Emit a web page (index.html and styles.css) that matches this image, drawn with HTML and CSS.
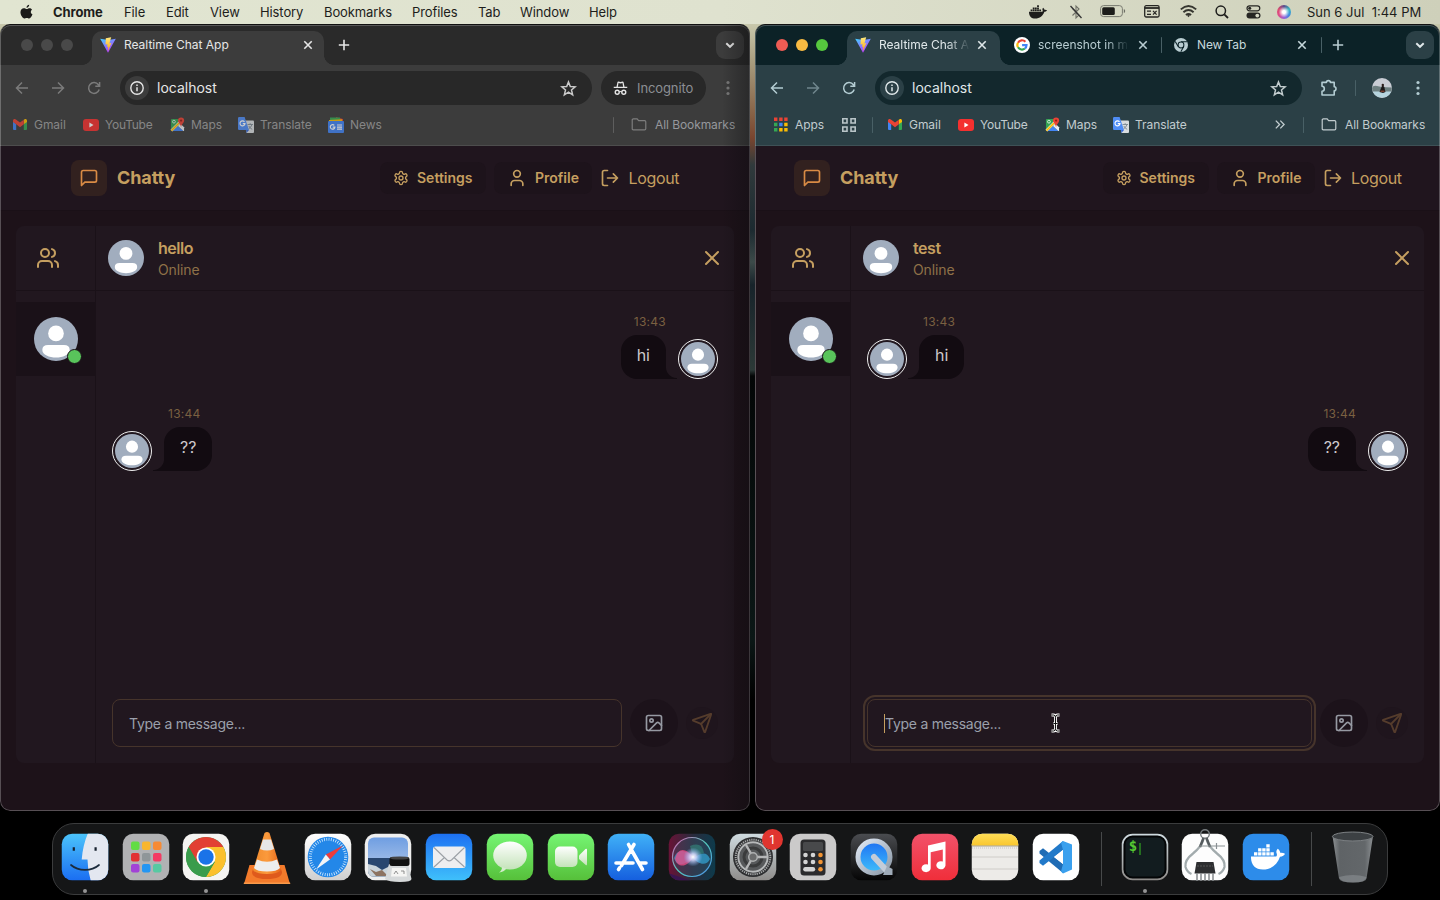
FILE: index.html
```html
<!DOCTYPE html>
<html lang="en">
<head>
<meta charset="utf-8">
<title>Desktop</title>
<link rel="stylesheet" href="styles.css">
</head>
<body>
<svg class="defs" width="0" height="0" aria-hidden="true">
  <defs>
    <linearGradient id="viteA" x1="0" y1="0" x2=".6" y2="1"><stop offset="0" stop-color="#41d1ff"/><stop offset="1" stop-color="#bd34fe"/></linearGradient>
    <linearGradient id="viteB" x1="0" y1="0" x2="0" y2="1"><stop offset="0" stop-color="#ffea83"/><stop offset="1" stop-color="#ffa800"/></linearGradient>
    <linearGradient id="blue" x1="0" y1="0" x2="0" y2="1"><stop offset="0" stop-color="#4cc5fb"/><stop offset="1" stop-color="#1a6df2"/></linearGradient>
    <linearGradient id="mailG" x1="0" y1="0" x2="0" y2="1"><stop offset="0" stop-color="#1d70f2"/><stop offset="1" stop-color="#3fc0fb"/></linearGradient>
    <linearGradient id="storeG" x1="0" y1="0" x2="0" y2="1"><stop offset="0" stop-color="#40b1f7"/><stop offset="1" stop-color="#155fdf"/></linearGradient>
    <linearGradient id="green" x1="0" y1="0" x2="0" y2="1"><stop offset="0" stop-color="#75f573"/><stop offset="1" stop-color="#56c03a"/></linearGradient>
    <linearGradient id="white" x1="0" y1="0" x2="0" y2="1"><stop offset="0" stop-color="#fff"/><stop offset="1" stop-color="#cfcfcf"/></linearGradient>
    <linearGradient id="bubbleG" x1="0" y1="0" x2="0" y2="1"><stop offset="0" stop-color="#fff"/><stop offset="1" stop-color="#c4e3b9"/></linearGradient>
    <linearGradient id="red" x1="0" y1="0" x2="0" y2="1"><stop offset="0" stop-color="#f2526a"/><stop offset="1" stop-color="#f02e3a"/></linearGradient>
    <linearGradient id="dark" x1="0" y1="0" x2="0" y2="1"><stop offset="0" stop-color="#4a4c50"/><stop offset="1" stop-color="#050505"/></linearGradient>
    <linearGradient id="steel" x1="0" y1="0" x2="0" y2="1"><stop offset="0" stop-color="#cfdbe0"/><stop offset="1" stop-color="#8f8d8b"/></linearGradient>
    <linearGradient id="qtR" x1="0" y1="0" x2="1" y2="1"><stop offset="0" stop-color="#dfe8f4"/><stop offset="1" stop-color="#8b98a6"/></linearGradient>
    <linearGradient id="cone" x1="0" y1="0" x2="1" y2="0"><stop offset="0" stop-color="#f08a2c"/><stop offset=".5" stop-color="#fb9a3c"/><stop offset="1" stop-color="#e8671b"/></linearGradient>
    <linearGradient id="siriBg" x1="0" y1="0" x2="1" y2="0"><stop offset="0" stop-color="#6b1236"/><stop offset=".5" stop-color="#2b2a3c"/><stop offset="1" stop-color="#0c3b4c"/></linearGradient>
    <radialGradient id="siriGlow"><stop offset="0" stop-color="#fff"/><stop offset=".35" stop-color="#d6d8ff" stop-opacity=".85"/><stop offset="1" stop-color="#7fb6ff" stop-opacity="0"/></radialGradient>
    <linearGradient id="siriRing" x1="0" y1="0" x2="1" y2="1"><stop offset="0" stop-color="#e05ab0"/><stop offset=".5" stop-color="#52cbbd"/><stop offset="1" stop-color="#4d8be8"/></linearGradient>
    <linearGradient id="trashG" x1="0" y1="0" x2="1" y2="0"><stop offset="0" stop-color="#8c9093"/><stop offset=".18" stop-color="#5f6366"/><stop offset=".8" stop-color="#63676a"/><stop offset="1" stop-color="#8b8f92"/></linearGradient>
    <linearGradient id="notesG" x1="0" y1="0" x2="0" y2="1"><stop offset="0" stop-color="#ffdf59"/><stop offset="1" stop-color="#f9c62e"/></linearGradient>
    <linearGradient id="skyG" x1="0" y1="0" x2="0" y2="1"><stop offset="0" stop-color="#6f9ee2"/><stop offset="1" stop-color="#b9cdea"/></linearGradient>
    <clipPath id="tile"><rect x=".75" y=".75" width="46.5" height="46.5" rx="10.5"/></clipPath>
    <clipPath id="disc"><circle cx="18" cy="18" r="18"/></clipPath>
  </defs>
  <symbol id="vite" viewBox="0 0 16 16"><path fill="url(#viteA)" d="M.2 1.8 8 15.8 15.8 1.8 8.5 3z"/><path fill="url(#viteB)" d="M11.2.2 5.8 1.2 5.5 7.6l2-.4L7 10l1.3-.5-.5 4.7 3.6-8.1-2 .4z"/></symbol>
  <symbol id="close" viewBox="0 0 12 12"><path d="M2.3 2.3 9.7 9.7M9.7 2.3 2.3 9.7" stroke="currentColor" stroke-width="1.6"/></symbol>
  <symbol id="plus" viewBox="0 0 12 12"><path d="M6 .8V11.2M.8 6H11.2" stroke="currentColor" stroke-width="1.6"/></symbol>
  <symbol id="chev" viewBox="0 0 12 12"><path d="M2.3 4.2 6 7.8 9.7 4.2" fill="none" stroke="currentColor" stroke-width="1.9"/></symbol>
  <symbol id="back" viewBox="0 0 16 16"><path d="M14 8H3M8 2.5 2.5 8 8 13.5" fill="none" stroke="currentColor" stroke-width="1.5"/></symbol>
  <symbol id="fwd" viewBox="0 0 16 16"><path d="M2 8H13M8 2.5 13.5 8 8 13.5" fill="none" stroke="currentColor" stroke-width="1.5"/></symbol>
  <symbol id="reload" viewBox="0 0 16 16"><path d="M13.2 9.5A5.4 5.4 0 1 1 12.4 4.800L13.600 6M13.600 2V6.300H9.300" fill="none" stroke="currentColor" stroke-width="1.5"/></symbol>
  <symbol id="info" viewBox="0 0 16 16"><circle cx="8" cy="8" r="6.200" fill="none" stroke="currentColor" stroke-width="1.400"/><path d="M8 7.200V11.300M8 4.600V6.100" stroke="currentColor" stroke-width="1.500"/></symbol>
  <symbol id="star" viewBox="0 0 16 16"><path d="M8 1.800 9.700 6.100 14.300 6.400 10.800 9.400 11.900 13.900 8 11.400 4.100 13.900 5.200 9.400 1.700 6.400 6.300 6.100z" fill="none" stroke="currentColor" stroke-width="1.400"/></symbol>
  <symbol id="incog" viewBox="0 0 16 16"><path fill="currentColor" fill-rule="evenodd" d="M4.700 1.200c.2-.5.600-.8 1.100-.700L8 1 10.200.500c.5-.1 1 .2 1.100.700L12.300 6H15.200V7.500H.8V6H3.700zM5.200 6H10.800L10.100 2.200 8 2.700 5.900 2.200z"/><path d="M6.600 11.700Q8 10.800 9.400 11.700" fill="none" stroke="currentColor" stroke-width="1.200"/><circle cx="4.500" cy="12" r="2.100" fill="none" stroke="currentColor" stroke-width="1.500"/><circle cx="11.500" cy="12" r="2.100" fill="none" stroke="currentColor" stroke-width="1.500"/></symbol>
  <symbol id="dots" viewBox="0 0 4 16"><g fill="currentColor"><circle cx="2" cy="2.500" r="1.600"/><circle cx="2" cy="8" r="1.600"/><circle cx="2" cy="13.500" r="1.600"/></g></symbol>
  <symbol id="folder" viewBox="0 0 16 14"><path d="M.7 2.200Q.7 1 1.900 1H6L7.600 2.800H14Q15.300 2.800 15.300 4V11.500Q15.300 12.700 14 12.700H1.900Q.7 12.700.7 11.500z" fill="none" stroke="currentColor" stroke-width="1.300"/></symbol>
  <symbol id="gmail" viewBox="0 0 14 11"><path fill="#4285f4" d="M0 2V10Q0 11 1 11H3.200V5L0 2.500z"/><path fill="#34a853" d="M10.800 11H13Q14 11 14 10V2.300L10.800 5z"/><path fill="#fbbc04" d="M10.800 1.200V5.300L14 2.900V1.700C14 .1 12.200-.5 10.800.700z"/><path fill="#ea4335" d="M0 1.700C0 .1 1.800-.5 3.200.700L7 3.600 10.800.700V5.300L7 8.200 3.200 5.300 0 2.900z"/></symbol>
  <symbol id="yt" viewBox="0 0 16 12"><rect width="16" height="12" rx="3" fill="#f4302f"/><path d="M6.400 3.600V8.400L10.500 6z" fill="#fff"/></symbol>
  <symbol id="maps" viewBox="0 0 16 16"><path fill="#35a353" d="M1 3Q1 2 2 2H9L12 8 1 14z"/><path fill="#4285f4" d="M3 15 8.500 9.500 14.500 15z"/><path fill="#e9eef2" d="M8.500 9.500 11 7 15 11V15L14.300 15z"/><path d="M1.500 14.500 11 5" stroke="#fff" stroke-width="2.800"/><path d="M1.500 14.500 9.500 6.500" stroke="#fbbc04" stroke-width="1.700"/><circle cx="4.200" cy="5" r="1.500" fill="none" stroke="#d9efdf"/><path fill="#ea4335" d="M11.800.500a3.300 3.300 0 0 1 3.300 3.300c0 2.600-2.700 3.600-3.300 7.200-.6-3.600-3.300-4.600-3.300-7.200a3.300 3.300 0 0 1 3.300-3.300z"/><circle cx="11.800" cy="3.800" r="1.200" fill="#951f17"/></symbol>
  <symbol id="translate" viewBox="0 0 16 16"><path fill="#d8dcdf" d="M6 3.500H15Q16 3.500 16 4.500V15Q16 16 15 16H8.500z"/><path d="M9.500 7.500H15M12.200 6.200V7.500M14 7.600Q13 10.500 10.500 12M10.800 9Q12 11.500 14.200 12.300" fill="none" stroke="#7b8791" stroke-width=".9"/><path fill="#3367d6" d="M8 13H11L8.500 16z"/><path fill="#4f8df5" d="M0 1.200Q0 0 1.200 0H6.600L11 13H1.200Q0 13 0 12z"/><path d="M6.500 4.900A2.500 2.500 0 1 0 7 6.600H4.800" fill="none" stroke="#fff" stroke-width="1.100"/></symbol>
  <symbol id="news" viewBox="0 0 16 16"><path fill="#ea4335" d="M8 .3 15 2V5H8z"/><path fill="#34a853" d="M2 .5H12V5H2z"/><path fill="#fbbc04" d="M1 3 14 2.200V6H1z"/><rect y="4" width="16" height="12" rx="1" fill="#4285f4"/><path d="M6.300 8.300A2.300 2.300 0 1 0 6.900 10.200H4.700M9 8H14M9 10.100H14M9 12.200H14" fill="none" stroke="#fff" stroke-width="1.200"/></symbol>
  <symbol id="face" viewBox="0 0 36 36"><g clip-path="url(#disc)"><rect width="36" height="36" fill="#a1adbe"/><circle cx="18" cy="13.400" r="6.400" fill="#fff"/><path fill="#fff" d="M11.500 23H24.500Q29.200 23 29.200 27C29.200 31 23.500 33.200 18 33.200S6.800 31 6.800 27Q6.800 23 11.500 23z"/></g></symbol>
  <symbol id="msg" viewBox="0 0 24 24"><path d="M21 15a2 2 0 0 1-2 2H7l-4 4V5a2 2 0 0 1 2-2h14a2 2 0 0 1 2 2z"/></symbol>
  <symbol id="gear" viewBox="0 0 24 24"><path d="M12.220 2h-.44a2 2 0 0 0-2 2v.18a2 2 0 0 1-1 1.730l-.43.25a2 2 0 0 1-2 0l-.15-.08a2 2 0 0 0-2.730.730l-.22.38a2 2 0 0 0 .73 2.730l.15.1a2 2 0 0 1 1 1.720v.51a2 2 0 0 1-1 1.740l-.15.09a2 2 0 0 0-.73 2.730l.22.38a2 2 0 0 0 2.730.730l.15-.08a2 2 0 0 1 2 0l.43.25a2 2 0 0 1 1 1.730V20a2 2 0 0 0 2 2h.44a2 2 0 0 0 2-2v-.18a2 2 0 0 1 1-1.730l.43-.25a2 2 0 0 1 2 0l.15.08a2 2 0 0 0 2.730-.73l.22-.39a2 2 0 0 0-.73-2.730l-.15-.08a2 2 0 0 1-1-1.740v-.5a2 2 0 0 1 1-1.740l.15-.09a2 2 0 0 0 .73-2.730l-.22-.38a2 2 0 0 0-2.730-.73l-.15.08a2 2 0 0 1-2 0l-.43-.25a2 2 0 0 1-1-1.730V4a2 2 0 0 0-2-2z"/><circle cx="12" cy="12" r="3"/></symbol>
  <symbol id="user" viewBox="0 0 24 24"><path d="M19 21v-2a4 4 0 0 0-4-4H9a4 4 0 0 0-4 4v2"/><circle cx="12" cy="7" r="4"/></symbol>
  <symbol id="logout" viewBox="0 0 24 24"><path d="M9 21H5a2 2 0 0 1-2-2V5a2 2 0 0 1 2-2h4M16 17l5-5-5-5M21 12H9"/></symbol>
  <symbol id="users" viewBox="0 0 24 24"><path d="M16 21v-2a4 4 0 0 0-4-4H6a4 4 0 0 0-4 4v2"/><circle cx="9" cy="7" r="4"/><path d="M22 21v-2a4 4 0 0 0-3-3.870M16 3.130a4 4 0 0 1 0 7.750"/></symbol>
  <symbol id="x" viewBox="0 0 24 24"><path d="M18 6 6 18M6 6l12 12"/></symbol>
  <symbol id="image" viewBox="0 0 24 24"><rect x="3" y="3" width="18" height="18" rx="2"/><circle cx="9" cy="9" r="2"/><path d="m21 15-3.086-3.086a2 2 0 0 0-2.828 0L6 21"/></symbol>
  <symbol id="send" viewBox="0 0 24 24"><path d="M14.536 21.686a.5.5 0 0 0 .937-.024l6.500-19a.496.496 0 0 0-.635-.635l-19 6.500a.5.5 0 0 0-.024.937l7.930 3.180a2 2 0 0 1 1.112 1.110z"/><path d="m21.854 2.147-10.940 10.939"/></symbol>
  <symbol id="whale" viewBox="0 0 34 26"><path fill="currentColor" d="M0 12.500H25.200C26 11.600 26.200 10.600 25.600 9.200 25 7.600 25.400 6 26.700 4.800 28.200 5.800 29 7.200 29.200 8.700 31 8.500 32.700 8.800 34 9.800 33.200 11.600 31.500 12.600 29 12.700 26.400 20.600 20.300 25.500 11.800 25.500 4 25.500-.3 20.500 0 12.500z"/><g fill="currentColor"><path d="M3 8.300h3.400v3.300H3zM7.100 8.300h3.400v3.300H7.100zM11.200 8.300h3.400v3.300h-3.400zM15.300 8.300h3.400v3.300h-3.400zM19.400 8.300h3.400v3.300h-3.400zM7.100 4.300h3.400v3.300H7.100zM11.200 4.300h3.400v3.300h-3.400zM15.300 4.300h3.400v3.300h-3.400zM15.300.3h3.400v3.300h-3.400z"/></g></symbol>
</svg>

<div class="desktop">
  <header class="menubar">
    <svg class="apple" viewBox="0 0 14 16"><path fill="#1b1b19" d="M9.900.2C10 1.600 8.700 3.500 7 3.500 6.800 2 8.300.3 9.900.2zM12.900 5.500C11 6.700 11.200 9.500 13.400 10.500 12.700 12.700 11.400 15 9.900 15 8.900 15 8.600 14.400 7.300 14.400 6 14.400 5.600 15 4.700 15 2.900 15 .5 11.400.5 8.400.5 5.500 2.300 4 4.100 4 5.400 4 6.300 4.800 7.200 4.800 8 4.800 9 3.900 10.500 4 11.500 4 12.400 4.600 12.900 5.500z"/></svg>
    <nav class="menus"><b>Chrome</b><span>File</span><span>Edit</span><span>View</span><span>History</span><span>Bookmarks</span><span>Profiles</span><span>Tab</span><span>Window</span><span>Help</span></nav>
    <div class="status">
      <svg width="18" height="14"><use href="#whale"/></svg>
      <svg width="14" height="16" viewBox="0 0 14 16" fill="none" stroke="#6f7067" stroke-width="1.100"><path d="M3.500 4.500 10 11 7 14V2L10 5 3.500 11.500"/><path d="M1.500 2 12.500 14" stroke="#333" stroke-width="1.300"/></svg>
      <svg width="26" height="13" viewBox="0 0 26 13"><rect x=".6" y=".6" width="21.800" height="11" rx="3" fill="none" stroke="#797a70"/><rect x="2.200" y="2.200" width="12.600" height="7.800" rx="1.500" fill="#1c1c1a"/><path d="M23.800 4V8.200Q25.200 7.600 25.200 6.100T23.800 4z" fill="#6d6e65"/></svg>
      <svg width="16" height="13" viewBox="0 0 16 13" fill="none" stroke="#262623" stroke-width="1.300"><rect x=".7" y=".7" width="14.400" height="11.300" rx="1.500"/><path d="M1 3H15" stroke-width="1.800"/><path d="M3 6.200H7M3 9.300H7M9 5.800l3.600 3.900M12.600 5.800 9 9.700" stroke-width="1.200"/></svg>
      <svg width="17" height="13" viewBox="0 0 17 13" fill="none" stroke="#35352f" stroke-width="1.900"><path d="M.8 4.400Q8.500-2.300 16.200 4.400M3.400 7.300Q8.500 2.900 13.600 7.300M5.900 9.900Q8.500 7.900 11.100 9.900"/><path d="M8.500 12.200 7 10.600Q8.500 9.600 10 10.600z" fill="#35352f" stroke="none"/></svg>
      <svg width="14" height="14" viewBox="0 0 14 14" fill="none" stroke="#1d1d1b" stroke-width="1.500"><circle cx="5.800" cy="5.800" r="4.700"/><path d="M9.300 9.300 13 13" stroke-width="1.800"/></svg>
      <svg width="15" height="14" viewBox="0 0 15 14"><rect x="1" y=".8" width="12.800" height="5" rx="2.500" fill="none" stroke="#262623" stroke-width="1.200"/><circle cx="3.700" cy="3.300" r="1.500" fill="#262623"/><rect x=".5" y="7.600" width="14" height="6" rx="3" fill="#262623"/><circle cx="11.300" cy="10.600" r="1.900" fill="#d6d8c5"/></svg>
      <i class="siri-dot"></i>
      <time>Sun 6 Jul&nbsp; 1:44 PM</time>
    </div>
  </header>

  <section class="window win-left">
    <div class="tabstrip">
      <div class="lights"><i></i><i></i><i></i></div>
      <div class="tab active"><svg width="16" height="16"><use href="#vite"/></svg><span class="title">Realtime Chat App</span><svg class="tx" width="12" height="12"><use href="#close"/></svg></div>
      <svg class="plus" width="12" height="12"><use href="#plus"/></svg>
      <div class="drop"><svg width="12" height="12"><use href="#chev"/></svg></div>
    </div>
    <div class="toolbar">
      <div class="nav"><svg width="16" height="16"><use href="#back"/></svg><svg width="16" height="16"><use href="#fwd"/></svg><svg width="16" height="16"><use href="#reload"/></svg></div>
      <div class="omni"><i class="site"><svg width="16" height="16"><use href="#info"/></svg></i><span>localhost</span><svg class="star" width="17" height="17"><use href="#star"/></svg></div>
      <div class="incog"><svg width="15" height="15"><use href="#incog"/></svg><span>Incognito</span></div>
      <svg class="dots" width="4" height="16"><use href="#dots"/></svg>
    </div>
    <div class="bookmarks">
      <div class="bm w70"><svg width="14" height="11"><use href="#gmail"/></svg>Gmail</div>
      <div class="bm w87"><svg width="16" height="12"><use href="#yt"/></svg>YouTube</div>
      <div class="bm w68"><svg width="15" height="15"><use href="#maps"/></svg>Maps</div>
      <div class="bm w90"><svg width="16" height="16"><use href="#translate"/></svg>Translate</div>
      <div class="bm"><svg width="16" height="16"><use href="#news"/></svg>News</div>
      <div class="all"><i class="sep"></i><svg width="16" height="13"><use href="#folder"/></svg><span>All Bookmarks</span></div>
    </div>
    <main class="page">
      <div class="appbar">
        <i class="logo"><svg class="ic" width="20" height="20"><use href="#msg"/></svg></i><h1>Chatty</h1>
        <div class="actions"><a class="btn set"><svg class="ic" width="16" height="16"><use href="#gear"/></svg><span>Settings</span></a><a class="btn prof"><svg class="ic" width="20" height="20"><use href="#user"/></svg><span>Profile</span></a><a class="out"><svg class="ic" width="20" height="20"><use href="#logout"/></svg><span>Logout</span></a></div>
      </div>
      <div class="panel">
        <aside><div class="people"><svg class="ic" width="24" height="24"><use href="#users"/></svg></div><div class="contact"><div class="pic"><svg width="44" height="44"><use href="#face"/></svg><i class="on"></i></div></div></aside>
        <div class="chat">
          <div class="chathead"><svg width="36" height="36"><use href="#face"/></svg><div class="who"><b>hello</b><span>Online</span></div><svg class="ic x" width="24" height="24"><use href="#x"/></svg></div>
          <div class="msgs">
            <div class="msg end"><time>13:43</time><div class="line"><p>hi</p><i class="ring"><svg width="34" height="34"><use href="#face"/></svg></i></div></div>
            <div class="msg"><time>13:44</time><div class="line"><i class="ring"><svg width="34" height="34"><use href="#face"/></svg></i><p>??</p></div></div>
          </div>
          <div class="form"><div class="input"><span>Type a message...</span></div><i class="pick"><svg class="ic" width="20" height="20"><use href="#image"/></svg></i><i class="send"><svg class="ic" width="22" height="22"><use href="#send"/></svg></i></div>
        </div>
      </div>
    </main>
  </section>

  <section class="window win-right">
    <div class="tabstrip">
      <div class="lights"><i></i><i></i><i></i></div>
      <div class="tab active"><svg width="16" height="16"><use href="#vite"/></svg><span class="title fade">Realtime Chat A</span><svg class="tx" width="12" height="12"><use href="#close"/></svg></div>
      <div class="tab t2"><svg width="16" height="16" viewBox="0 0 16 16"><circle cx="8" cy="8" r="8" fill="#fff"/><g fill="none" stroke-width="2.200"><path stroke="#ea4335" d="M11.400 4.700A4.600 4.600 0 0 0 4 5.700"/><path stroke="#fbbc05" d="M4 5.700A4.600 4.600 0 0 0 4 10.300"/><path stroke="#34a853" d="M4 10.300A4.600 4.600 0 0 0 10.900 11.500"/><path stroke="#4285f4" d="M10.900 11.500A4.600 4.600 0 0 0 12.500 8.200H8.100"/></g></svg><span class="title fade">screenshot in m</span><svg class="tx" width="12" height="12"><use href="#close"/></svg></div>
      <i class="sep"></i>
      <div class="tab t3"><svg width="16" height="16" viewBox="0 0 16 16"><circle cx="8" cy="8" r="7" fill="#b9cdd2"/><g stroke="#0d242a" stroke-width="1.100" fill="none"><path d="M8 4.800H14M5.200 9.600 2.200 4.400M10.800 9.600 7.800 14.800"/></g><circle cx="8" cy="8" r="3.400" fill="#0d242a"/><circle cx="8" cy="8" r="2.400" fill="#b9cdd2"/></svg><span class="title">New Tab</span><svg class="tx" width="12" height="12"><use href="#close"/></svg></div>
      <i class="sep"></i>
      <svg class="plus" width="12" height="12"><use href="#plus"/></svg>
      <div class="drop"><svg width="12" height="12"><use href="#chev"/></svg></div>
    </div>
    <div class="toolbar">
      <div class="nav"><svg width="16" height="16"><use href="#back"/></svg><svg class="off" width="16" height="16"><use href="#fwd"/></svg><svg width="16" height="16"><use href="#reload"/></svg></div>
      <div class="omni"><i class="site"><svg width="16" height="16"><use href="#info"/></svg></i><span>localhost</span><svg class="star" width="17" height="17"><use href="#star"/></svg></div>
      <svg class="puzzle" width="18" height="18" viewBox="0 0 18 18"><path d="M2 3.400H6.400A2 1.800 0 0 1 10.400 3.400H14.200V7.800A1.800 2 0 0 1 14.200 11.800V16H2V12.300A2.300 2.500 0 0 0 2 7.300z" fill="none" stroke="#b3ccd2" stroke-width="1.600" stroke-linejoin="round"/></svg>
      <i class="sep"></i>
      <svg class="me" width="20" height="20" viewBox="0 0 20 20"><circle cx="10" cy="10" r="10" fill="#c9ccd4"/><path d="M0 10Q1 7 5 8T11 9 20 9.500L19 14H1z" fill="#6d7f80"/><path d="M.8 13.500H19.200A10 10 0 0 1 .8 13.500z" fill="#b5d4de"/><path d="M7.500 14 9.500 9 10.500 7 12.300 9 13.500 14 11 15z" fill="#1b1819"/><circle cx="10.800" cy="7" r="1.200" fill="#2a1d1a"/><path d="M8.500 13.200h4" stroke="#a0523c"/></svg>
      <svg class="dots" width="4" height="16"><use href="#dots"/></svg>
    </div>
    <div class="bookmarks">
      <div class="bm w68"><svg width="14" height="15" viewBox="0 0 14 15"><path fill="#ea4335" d="M0 .5h3.400v3.400H0zM5.200.5h3.400v3.400H5.200zM10.200.5h3.400v3.400h-3.400z"/><path fill="#34a853" d="M0 5.800h3.400v3.400H0zM0 11.100h3.400v3.400H0z"/><path fill="#4285f4" d="M5.200 5.800h3.400v3.400H5.200z"/><path fill="#fbbc04" d="M10.200 5.800h3.400v3.400h-3.400zM5.200 11.100h3.400v3.400H5.200zM10.200 11.100h3.400v3.400h-3.400z"/></svg>Apps</div>
      <div class="bm w30"><svg width="14" height="14" viewBox="0 0 14 14" fill="none" stroke="#b9c5c8" stroke-width="1.600"><path d="M.8.800h4.200v4.200H.8zM9 .8h4.200v4.200H9zM.8 9h4.200v4.200H.8zM9 9h4.200v4.200H9z"/></svg></div>
      <i class="sep bsep"></i>
      <div class="bm w70"><svg width="14" height="11"><use href="#gmail"/></svg>Gmail</div>
      <div class="bm w87"><svg width="16" height="12"><use href="#yt"/></svg>YouTube</div>
      <div class="bm w68"><svg width="15" height="15"><use href="#maps"/></svg>Maps</div>
      <div class="bm"><svg width="16" height="16"><use href="#translate"/></svg>Translate</div>
      <div class="all"><svg class="more" width="10" height="9" viewBox="0 0 10 9"><path d="M.8.600 4.600 4.500.8 8.400M5.300.600 9.100 4.500 5.300 8.400" fill="none" stroke="currentColor" stroke-width="1.300"/></svg><i class="sep"></i><svg width="16" height="13"><use href="#folder"/></svg><span>All Bookmarks</span></div>
    </div>
    <main class="page">
      <div class="appbar">
        <i class="logo"><svg class="ic" width="20" height="20"><use href="#msg"/></svg></i><h1>Chatty</h1>
        <div class="actions"><a class="btn set"><svg class="ic" width="16" height="16"><use href="#gear"/></svg><span>Settings</span></a><a class="btn prof"><svg class="ic" width="20" height="20"><use href="#user"/></svg><span>Profile</span></a><a class="out"><svg class="ic" width="20" height="20"><use href="#logout"/></svg><span>Logout</span></a></div>
      </div>
      <div class="panel">
        <aside><div class="people"><svg class="ic" width="24" height="24"><use href="#users"/></svg></div><div class="contact"><div class="pic"><svg width="44" height="44"><use href="#face"/></svg><i class="on"></i></div></div></aside>
        <div class="chat">
          <div class="chathead"><svg width="36" height="36"><use href="#face"/></svg><div class="who"><b>test</b><span>Online</span></div><svg class="ic x" width="24" height="24"><use href="#x"/></svg></div>
          <div class="msgs">
            <div class="msg"><time>13:43</time><div class="line"><i class="ring"><svg width="34" height="34"><use href="#face"/></svg></i><p>hi</p></div></div>
            <div class="msg end"><time>13:44</time><div class="line"><p>??</p><i class="ring"><svg width="34" height="34"><use href="#face"/></svg></i></div></div>
          </div>
          <div class="form"><div class="input focus"><span>Type a message...</span></div><i class="pick"><svg class="ic" width="20" height="20"><use href="#image"/></svg></i><i class="send"><svg class="ic" width="22" height="22"><use href="#send"/></svg></i></div>
        </div>
      </div>
    </main>
  </section>

  <svg class="ibeam" width="11" height="20" viewBox="0 0 11 20" fill="none"><path d="M1.500 2H3.500Q5.500 2 5.500 4.500V15.500Q5.500 18 3.500 18H1.500M9.500 2H7.500Q5.500 2 5.500 4.500M9.500 18H7.500Q5.500 18 5.500 15.500M3.500 10.500H7.500" stroke="#fff" stroke-width="2.800"/><path d="M1.500 2H3.500Q5.500 2 5.500 4.500V15.500Q5.500 18 3.500 18H1.500M9.500 2H7.500Q5.500 2 5.500 4.500M9.500 18H7.500Q5.500 18 5.500 15.500M3.500 10.500H7.500" stroke="#111" stroke-width="1"/></svg>

  <footer class="dock">
    <div class="app run"><svg viewBox="0 0 48 48"><g clip-path="url(#tile)"><rect width="48" height="48" fill="url(#blue)"/><path d="M27 0C23.500 8 21.500 17 20.700 26.500H26.500Q26.500 37 29.800 48H48V0z" fill="#e3e7f0"/></g><path d="M12.800 14.200V17.700M34.600 14.200V17.700" stroke="#17222e" stroke-width="2.200"/><path d="M10 32C17.500 38.500 30.500 38.500 38 32" fill="none" stroke="#1b2b3c" stroke-width="1.700" stroke-linecap="round"/></svg></div>
    <div class="app"><svg viewBox="0 0 48 48"><rect x=".75" y=".75" width="46.500" height="46.500" rx="10.500" fill="#b1b2b4"/><g><rect x="9" y="8.500" width="8.500" height="8.500" rx="2" fill="#62dc45"/><rect x="20" y="8.500" width="8.500" height="8.500" rx="2" fill="#f8b62d"/><rect x="31" y="8.500" width="8.500" height="8.500" rx="2" fill="#f68a34"/><rect x="9" y="20" width="8.500" height="8.500" rx="2" fill="#e23033"/><rect x="20" y="20" width="8.500" height="8.500" rx="2" fill="#8f9699"/><rect x="31" y="20" width="8.500" height="8.500" rx="2" fill="#f33a63"/><rect x="9" y="31" width="8.500" height="8.500" rx="2" fill="#a243d6"/><rect x="20" y="31" width="8.500" height="8.500" rx="2" fill="#2496f2"/><rect x="31" y="31" width="8.500" height="8.500" rx="2" fill="#57c9a2"/></g></svg></div>
    <div class="app run"><svg viewBox="0 0 48 48"><rect x=".75" y=".75" width="46.500" height="46.500" rx="10.500" fill="#f5f4f2"/><circle cx="24" cy="24" r="20" fill="#3a9c4c"/><path d="M24 24 6.700 14A20 20 0 0 1 41.300 14z" fill="#e23f33"/><path d="M24 44A20 20 0 0 0 41.300 14H24L32.700 29z" fill="#fbc02d"/><path d="M6.700 14 15.300 29 24 14z" fill="#e23f33"/><path d="M6.700 14 15.300 29 24 30 32.700 29 24 44A20 20 0 0 1 6.700 14z" fill="#3a9c4c"/><circle cx="24" cy="24" r="9.500" fill="#fff"/><circle cx="24" cy="24" r="7.700" fill="#1a73e8"/></svg></div>
    <div class="app"><svg viewBox="0 0 48 48"><path d="M6.500 32H41.500L47 51H1z" fill="#f47b2b"/><path d="M1 49.500H47L47.300 51H.7z" fill="#f99a4a"/><path d="M9 39Q9 46 24 46T39 39L38 36H10z" fill="#df5a1c"/><path d="M21.500 0Q24-2 26.500 0L38 37Q35 41 24 41T10 37z" fill="url(#cone)"/><path d="M20 6.500H28L31 16Q24 19 17 16z" fill="#e6e6e6"/><path d="M14 26.500Q24 31 34 26.500L37 35Q34 38.500 24 38.500T11 35z" fill="#ededed"/></svg></div>
    <div class="app"><svg viewBox="0 0 48 48"><rect x=".75" y=".75" width="46.500" height="46.500" rx="10.500" fill="url(#white)"/><circle cx="24" cy="24" r="20.300" fill="#2387e8"/><circle cx="24" cy="24" r="17.700" fill="none" stroke="#d5ecff" stroke-width="3" stroke-dasharray=".8 1.520"/><path d="M39 12.500 21.800 21.500 26 26.500z" fill="#ef3b3a"/><path d="M12 36.500 21.800 21.500 26 26.500z" fill="#f3f5f7"/></svg></div>
    <div class="app"><svg viewBox="0 0 48 48"><rect x=".75" y=".75" width="46.500" height="46.500" rx="10.500" fill="#eee"/><rect x="4" y="4.500" width="40" height="39" rx="6" fill="url(#skyG)"/><path d="M4 25H44V37.500Q44 43.500 38 43.500H10Q4 43.500 4 37.500z" fill="#28466f"/><path d="M4 31 12 33 18 37 26 33V43.500H10Q4 43.500 4 38z" fill="#c9d3da"/><path d="M6 36 12 39 18 37 24 43H12z" fill="#8d7361"/><path d="M25 31H44L47.500 46Q47.500 49 36 49T21 46z" fill="#d6d9da"/><rect x="25.500" y="24" width="20" height="9" rx="2.500" fill="#111"/><ellipse cx="35.500" cy="25" rx="9.500" ry="1.600" fill="#444"/><path d="M28 35H42L43 43.500H27z" fill="#f5f5f3"/><path d="M30 41 32 38 34 41M37 38H40V41" fill="none" stroke="#777" stroke-width=".8"/></svg></div>
    <div class="app"><svg viewBox="0 0 48 48"><rect x=".75" y=".75" width="46.500" height="46.500" rx="10.500" fill="url(#mailG)"/><rect x="8" y="13.500" width="32.500" height="21.500" rx="2.500" fill="#eeeef0"/><path d="M9 14.500 22 27Q24.200 28.800 26.500 27L39.500 14.500M9 34 19.500 24.500M39.500 34 29 24.500" fill="none" stroke="#9ca0a6" stroke-width="1.100"/></svg></div>
    <div class="app"><svg viewBox="0 0 48 48"><rect x=".75" y=".75" width="46.500" height="46.500" rx="10.500" fill="url(#green)"/><ellipse cx="24" cy="22.500" rx="16.800" ry="14" fill="url(#bubbleG)"/><path d="M16 34Q16 37.500 13 39.500 18 39 20.500 35.500z" fill="#d5ebcd"/></svg></div>
    <div class="app"><svg viewBox="0 0 48 48"><rect x=".75" y=".75" width="46.500" height="46.500" rx="10.500" fill="url(#green)"/><rect x="8" y="13.500" width="22.500" height="20.500" rx="5" fill="url(#bubbleG)"/><path d="M32 22.500 38.500 16Q40 15 40 17V31Q40 33 38.500 31.700L32 26z" fill="url(#bubbleG)"/></svg></div>
    <div class="app"><svg viewBox="0 0 48 48"><rect x=".75" y=".75" width="46.500" height="46.500" rx="10.500" fill="url(#storeG)"/><path d="M21.500 11.500 24 16M27 11.500 14.500 32.500M12.500 35 11.500 36.500M24.500 17 35.500 36.500M9 30H26M33 30H39" stroke="#fff" stroke-width="3.600" stroke-linecap="round"/></svg></div>
    <div class="app"><svg viewBox="0 0 48 48"><g clip-path="url(#tile)"><rect width="48" height="48" fill="url(#siriBg)"/><path d="M0 48V40L24 48z" fill="#3a1550"/></g><circle cx="24" cy="24" r="19.500" fill="#41607a" fill-opacity=".3" stroke="url(#siriRing)" stroke-width="1.200"/><path d="M6 25C10 15 18 17 24 24 30 31 38 34 42 26 38 16 30 22 24 26 18 31 9 35 6 25z" fill="#35b9ee" opacity=".6"/><path d="M7 26C10 14 18 15 25 24 20 34 10 36 7 26z" fill="#f04c88" opacity=".75"/><path d="M22 13Q34 8 36 20L25 24z" fill="#37b598" opacity=".4"/><circle cx="25" cy="24" r="9.500" fill="url(#siriGlow)"/></svg></div>
    <div class="app"><svg viewBox="0 0 48 48"><rect x=".75" y=".75" width="46.500" height="46.500" rx="10.500" fill="url(#steel)"/><circle cx="24" cy="24" r="20" fill="#2e2f31"/><circle cx="24" cy="24" r="17.300" fill="none" stroke="#a4a6a7" stroke-width="2" stroke-dasharray="1.300 .9"/><circle cx="24" cy="24" r="14.700" fill="#57595b" stroke="#b7b9ba" stroke-width="2"/><circle cx="24" cy="24" r="9" fill="none" stroke="#3a3b3c" stroke-width="3"/><path d="M24 24H38M24 24 17 12M24 24 17 36" stroke="#b5b6b7" stroke-width="2.400"/><circle cx="24" cy="24" r="4.300" fill="#6b6c6d" stroke="#aeb0b1" stroke-width="1.500"/></svg><em class="badge">1</em></div>
    <div class="app"><svg viewBox="0 0 48 48"><rect x=".75" y=".75" width="46.500" height="46.500" rx="10.500" fill="#cbcaca"/><rect x="11.500" y="6.500" width="25" height="36" rx="3.500" fill="#2b2b2d"/><rect x="14" y="9" width="20" height="9" rx="1.500" fill="#48494b"/><g fill="#d4d4d4"><circle cx="16.500" cy="22" r="2.300"/><circle cx="24" cy="22" r="2.300"/><circle cx="16.500" cy="29" r="2.300"/><circle cx="24" cy="29" r="2.300"/><rect x="14.200" y="34" width="12" height="4.500" rx="2.200"/></g><g fill="#f39433"><circle cx="31.500" cy="22" r="2.300"/><circle cx="31.500" cy="29" r="2.300"/><circle cx="31.500" cy="36.200" r="2.300"/></g></svg></div>
    <div class="app"><svg viewBox="0 0 48 48"><rect x=".75" y=".75" width="46.500" height="46.500" rx="10.500" fill="url(#dark)"/><circle cx="24" cy="24" r="16" fill="url(#mailG)" stroke="url(#qtR)" stroke-width="5"/><path d="M24 24 36 37" stroke="#c3ccd8" stroke-width="6" stroke-linecap="round"/><path d="M33 42H42.500V36L37 33z" fill="#9fabb8"/></svg></div>
    <div class="app"><svg viewBox="0 0 48 48"><rect x=".75" y=".75" width="46.500" height="46.500" rx="10.500" fill="url(#red)"/><path d="M17 12.500 34.500 8.500V32.500A4.600 4 0 1 1 31.800 28.600V16.500L19.700 19.200V35.500A4.600 4 0 1 1 17 31.500z" fill="#fff"/></svg></div>
    <div class="app"><svg viewBox="0 0 48 48"><g clip-path="url(#tile)"><rect width="48" height="48" fill="#edebe8"/><rect width="48" height="12.800" fill="url(#notesG)"/></g><path d="M1 13H47" stroke="#a9a38e"/><path d="M1 15H47" stroke="#bbb" stroke-dasharray=".8 1.200"/><path d="M1 24H47M1 36H47" stroke="#cfccc8"/></svg></div>
    <div class="app"><svg viewBox="0 0 48 48"><rect x=".75" y=".75" width="46.500" height="46.500" rx="10.500" fill="#fff"/><path d="M7.500 18 11 15.300 31 31V40L7.500 20.500z" fill="#1f6cb5"/><path d="M7.500 30 11 32.700 31 17V8L7.500 27.500z" fill="#2179c9"/><path d="M31 8 40 11.500V36.500L31 40.500 29 38.500 31 31V17L29 9.500z" fill="#3aa0ee"/><path d="M31 17V31L22 24z" fill="#fff"/></svg></div>
    <i class="dsep"></i>
    <div class="app run"><svg viewBox="0 0 48 48"><rect x="1.600" y="1.600" width="44.800" height="44.800" rx="10" fill="#030506" stroke="url(#steel)" stroke-width="1.700"/><rect x="4.500" y="4.500" width="39" height="39" rx="7" fill="#121c1f"/><path d="M19 10V22" stroke="#2b8a22" stroke-width="1.500"/></svg><span class="prompt">$</span></div>
    <div class="app"><svg viewBox="0 0 48 48"><rect x=".75" y=".75" width="46.500" height="46.500" rx="10.500" fill="#fdfdfd"/><circle cx="24" cy="1" r="4.300" fill="none" stroke="#777d80" stroke-width="1.400"/><path d="M22.500 6Q21 13 12 20.500 3.500 27 4.500 34 6 39 10.500 41M25.500 6Q27 13 36 20.500 44.500 27 43.500 34 42 39 37.500 41" fill="none" stroke="#a2abad" stroke-width="2.300"/><path d="M22.500 5 19 14M25.500 5 29 14" stroke="#555b5e" stroke-width="2.500"/><path d="M18 13H44M35.500 10V16" stroke="#8a9194" stroke-width="1.200"/><path d="M15.500 29H32.500L34.500 40.500H13.500z" fill="#2d2e30"/><path d="M16 33H32" stroke="#555" stroke-dasharray="2 1"/><path d="M16 40V48M20 40V48M24 40V48M28 40V48M32 40V48" stroke="#85898c" stroke-width="1.500"/></svg></div>
    <div class="app"><svg viewBox="0 0 48 48"><rect x=".75" y=".75" width="46.500" height="46.500" rx="10.500" fill="#2d8cea"/><svg x="9" y="11" width="34" height="26" color="#fff"><use href="#whale"/></svg></svg></div>
    <i class="dsep"></i>
    <div class="app"><svg class="bin" viewBox="0 0 48 48"><path d="M3.500 3 10 45.500Q11 49.500 24 49.500T37.500 45.500L44 3z" fill="url(#trashG)"/><ellipse cx="23.700" cy="3.500" rx="20.300" ry="4.500" fill="#3c4043" stroke="#7d8184" stroke-width="1"/><path d="M10 44Q24 40 37.500 44 37 49.500 24 49.500T10 44z" fill="#9a9ea1" opacity=".45"/></svg></div>
  </footer>
</div>
</body>
</html>
```
FILE: styles.css
```css
* { box-sizing: border-box; }
body { margin: 0; font-family: Inter, "Liberation Sans", sans-serif; font-size: 12px; }
svg { display: block; flex: none; overflow: visible; }
i, em { font-style: normal; flex: none; }
.defs { position: absolute; }
.desktop {
  position: relative; width: 1440px; height: 900px; overflow: hidden; color: #fff;
  background: linear-gradient(#c8c8ac 24px, #a99f80 60px, #866145 115px, #79452f 138px, #303a3c 165px, #1c2a30 230px, #3c4a49 262px, #17232a 285px, #2c3937 370px, #030606 376px, #0b1716 640px, #000 700px);
}

/* menu bar */
.menubar { display: flex; align-items: center; height: 24px; padding: 0 0 1px 20px; background: linear-gradient(90deg, #e1e5d1, #dfe2cf 50%, #ced0ba); color: #1d1d1b; font-size: 13px; white-space: nowrap; }
.apple { width: 13px; height: 16px; margin-right: 20px; }
.menus { display: grid; grid-template-columns: 71px 42px 44px 50px 64px 88px 66px 42px 69px 60px; letter-spacing: -.1px; }
.menus b { font-weight: 700; }
.status { display: flex; align-items: center; margin-left: auto; width: 411px; }
.status svg:nth-child(2) { margin-left: 22px; }
.status svg:nth-child(3) { margin-left: 17px; }
.status svg:nth-child(4) { margin-left: 18px; }
.status svg:nth-child(5) { margin-left: 20px; }
.status svg:nth-child(6) { margin-left: 18px; }
.status svg:nth-child(7) { margin-left: 17px; }
.siri-dot { width: 14px; height: 14px; margin: 0 16px; border-radius: 50%; background: radial-gradient(circle, #fff 15%, transparent 55%), conic-gradient(#5a4d8c, #39b8c0, #3c8be0, #9a62d8, #e04b86, #d84c70, #5a4d8c); }

/* windows */
.window { position: absolute; top: 24px; height: 787px; border-radius: 10px; overflow: hidden; }
.window::after { content: ""; position: absolute; inset: 0; border: 1px solid rgba(255, 255, 255, .26); border-top: 0; border-radius: 10px; box-shadow: inset 0 1px #111, inset 0 2px rgba(255, 255, 255, .22); pointer-events: none; }
.win-left { left: 0; width: 750px; --strip: #2a2a2a; --bar: #3c3c3c; --pill: #282828; --chip: #3c3c3c; --fg: #e6e6e6; --ico: #7b7b7b; --bmfg: #868686; --line: #5e5e5e; }
.win-right { left: 755px; width: 685px; --strip: #0c2227; --bar: #2b4046; --pill: #13282d; --chip: #2b4046; --fg: #e0e8ea; --ico: #b3ccd2; --bmfg: #c2cccf; --line: #496066; }
.win-left::before { content: ""; position: absolute; inset: 0 0 0 auto; width: 28px; background: linear-gradient(90deg, transparent, rgba(10, 10, 12, .36)); z-index: 2; }

.tabstrip { display: flex; height: 41px; padding-top: 7px; background: var(--strip); color: var(--fg); }
.lights { display: flex; gap: 8px; width: 92px; padding: 8px 0 0 21px; }
.lights i { width: 12px; height: 12px; border-radius: 50%; background: #494949; }
.win-right .lights i:nth-child(1) { background: #ee5c54; }
.win-right .lights i:nth-child(2) { background: #f9bb42; }
.win-right .lights i:nth-child(3) { background: #56c83e; }
.tab { display: flex; align-items: center; height: 28px; gap: 8px; padding-left: 8px; white-space: nowrap; }
.tab.active { position: relative; width: 232px; height: 34px; padding-bottom: 6px; background: var(--bar); border-radius: 10px 10px 0 0; }
.tab.active::before, .tab.active::after { content: ""; position: absolute; bottom: 0; width: 10px; height: 10px; }
.tab.active::before { left: -10px; background: radial-gradient(circle at 0 0, transparent 9.6px, var(--bar) 10.2px); }
.tab.active::after { right: -10px; background: radial-gradient(circle at 100% 0, transparent 9.6px, var(--bar) 10.2px); }
.title { letter-spacing: -.02px; padding-bottom: 1px; }
.fade { -webkit-mask-image: linear-gradient(90deg, #000 75%, transparent); mask-image: linear-gradient(90deg, #000 75%, transparent); }
.tx { margin: 0 10px 0 auto; }
.win-right .tab.active { width: 153px; }
.win-right .tab.active .title { width: 91px; }
.win-right .tab.active .tx { margin-left: -2px; }
.t2 .title { width: 91px; }
.t2 { width: 161px; margin-left: 0; padding-left: 14px; color: #b9cdd2; }
.t2 .tx { margin-right: 12px; }
.t3 { width: 159px; padding-left: 11px; color: #c6d8dc; }
.t3 .title { letter-spacing: -.12px; }
.t3 .tx { margin-right: 13px; }
.sep { width: 2px; height: 16px; background: var(--line); border-radius: 1px; }
.tabstrip .sep { width: 1px; margin-top: 6px; }
.plus { margin: 8px 0 0 14px; }
.win-right .plus { margin-left: 10px; color: #b9cdd2; }
.drop { display: grid; place-items: center; width: 28px; height: 28px; margin: 0 6px 0 auto; border-radius: 9px; background: var(--chip); }

.toolbar { display: flex; align-items: center; height: 46px; padding-left: 14px; background: var(--bar); color: var(--ico); }
.nav { display: flex; gap: 20px; width: 106px; }
.off { opacity: .5; }
.omni { display: flex; align-items: center; width: 472px; height: 34px; padding-left: 5px; border-radius: 17px; background: var(--pill); color: var(--fg); font-size: 14px; letter-spacing: 0; }
.omni span { padding-bottom: 1px; }
.site { display: grid; place-items: center; width: 24px; height: 24px; margin-right: 8px; border-radius: 50%; background: var(--chip); }
.star { margin: 0 15.500px 0 auto; opacity: .85; }
.incog { display: flex; align-items: center; gap: 9px; width: 105px; height: 34px; margin-left: 9px; padding-left: 12px; border-radius: 17px; background: var(--pill); color: #e4e4e4; font-size: 13px; letter-spacing: -.1px; }
.incog span { color: #8c8f94; }
.incog + .dots { margin-left: 20px; }
.win-right .omni { width: 427px; }
.puzzle { margin-left: 18px; }
.win-right .toolbar .sep { width: 1px; margin: 0 16px 0 17px; }
.me + .dots { margin-left: 24px; }

.bookmarks { display: flex; align-items: center; height: 35px; padding: 0 14px 7px 13px; background: var(--bar); border-bottom: 1px solid rgba(255, 255, 255, .09); color: var(--bmfg); letter-spacing: 0; white-space: nowrap; }
.win-right .bookmarks { padding-left: 19px; }
.bm { display: flex; align-items: center; gap: 6px; letter-spacing: -.05px; }
.bm.w70 { gap: 7px; }
.win-left .bm svg { opacity: .75; }
.win-right .bm.w68:first-child { gap: 7px; }
.w30 { width: 30px; } .w68 { width: 68px; } .w70 { width: 70px; } .w87 { width: 87px; } .w90 { width: 90px; }
.bm.w87 { letter-spacing: -.25px; }
.bsep { width: 1px; margin-right: 15px; }
.all { display: flex; align-items: center; margin-left: auto; letter-spacing: -.08px; }
.all .sep { width: 1px; }
.all .sep + svg { margin: 0 8px 0 17px; }
.all span { width: 81px; }
.win-left .all { color: #7d7d7d; }
.win-left .all span { color: #96989c; }
.more { margin-right: 18px; }

/* chat application */
.page { height: 665px; background: #1d1219; color: #c59f60; }
.ic { fill: none; stroke: currentColor; stroke-width: 2; stroke-linecap: round; stroke-linejoin: round; }
.appbar { display: flex; align-items: center; height: 65px; padding: 0 0 1px 71px; background: #20151e; border-bottom: 1px solid #1a1017; }
.logo { display: grid; place-items: center; width: 36px; height: 36px; border-radius: 8px; background: #32211f; color: #d98b45; }
h1 { margin: 0 0 0 10px; width: 263px; font-size: 18px; font-weight: 700; letter-spacing: -.1px; }
.actions { display: flex; align-items: center; }
.btn { display: flex; align-items: center; height: 32px; border-radius: 8px; background: #1d131b; font-size: 14px; font-weight: 600; letter-spacing: 0; }
.set { width: 106px; padding-left: 13px; gap: 8px; }
.prof { width: 98px; margin-left: 8px; padding-left: 13px; gap: 8px; }
.out { display: flex; align-items: center; gap: 8.500px; margin-left: 8px; font-size: 16px; letter-spacing: -.35px; }
.win-right .appbar { padding-left: 39px; }
.win-right h1 { width: 262.500px; }
.panel { display: flex; height: 537px; margin: 15px 16px 0; border-radius: 8px; background: #21171f; }
aside { width: 80px; border-right: 1px solid #1a1118; }
.people { height: 65px; padding: 20px 0 0 20px; border-bottom: 1px solid #1a1118; }
.contact { height: 74px; margin-top: 11px; padding: 15px 0 0 17.500px; background: #1a1118; }
.pic { position: relative; width: 44px; }
.on { position: absolute; right: -4px; bottom: -3px; width: 15px; height: 15px; border: 1.500px solid #1a1118; border-radius: 50%; background: #59c45b; }
.chat { display: flex; flex-direction: column; flex: 1; }
.chathead { display: flex; align-items: center; height: 65px; padding: 0 10px 0 12px; border-bottom: 1px solid #1a1118; }
.who { display: grid; margin: 1px 0 0 14px; line-height: 21px; }
.who b { font-size: 16px; font-weight: 600; letter-spacing: -.45px; }
.who span { font-size: 14px; color: #8f7148; letter-spacing: -.1px; }
.x { margin-left: auto; }
.msgs { flex: 1; padding: 23px 16px 0; }
.msg { height: 92px; }
.msg time { display: block; margin-left: 56px; height: 21px; line-height: 16px; color: #7a6041; letter-spacing: .25px; }
.line { display: flex; align-items: flex-end; gap: 12px; }
.ring { display: grid; place-items: center; width: 40px; height: 40px; border: 1px solid #eee; border-radius: 50%; }
.line p { position: relative; margin: 0; height: 44px; min-width: 45px; padding: 0 16px; border-radius: 16px 16px 16px 0; background: #120b11; color: #cdc8cb; font-size: 16px; line-height: 40px; text-align: center; }
.line p::before { content: ""; position: absolute; bottom: 0; left: -11px; width: 11px; height: 12px; background: radial-gradient(circle at 0 0, transparent 10.500px, #120b11 11.500px); }
.end time { margin: 0 52px 0 0; text-align: right; }
.end .line { justify-content: flex-end; }
.end .line p { border-radius: 16px 16px 0 16px; }
.end .line p::before { left: auto; right: -11px; background: radial-gradient(circle at 100% 0, transparent 10.500px, #120b11 11.500px); }
.form { display: flex; align-items: center; padding: 16px; }
.input { flex: 1; height: 48px; padding: 0 16px; border: 1px solid #46342b; border-radius: 8px; color: #9ba0ab; font-size: 14px; line-height: 48px; letter-spacing: -.26px; }
.focus { outline: 2px solid #46342b; outline-offset: 2px; }
.focus span { border-left: 1px solid #c59f60; padding: 1px 0; }
.pick { display: grid; place-items: center; width: 48px; height: 48px; margin-left: 8px; border-radius: 50%; background: #1c121a; color: #9699a2; }
.send { display: grid; place-items: center; width: 32px; height: 32px; margin-left: 8px; border-radius: 50%; background: #1f151d; color: #553c2c; }
.ibeam { position: absolute; left: 1050px; top: 713px; }

/* dock */
.dock { position: absolute; left: 52px; top: 823px; width: 1336px; height: 72px; padding-left: 2px; display: flex; background: #151617; border: 1px solid #3b3c3d; border-radius: 22px; }
.app { position: relative; width: 60.700px; padding: 8.500px 0 0 6px; flex: none; }
.app > svg { width: 48px; height: 48px; }
.app > .bin { margin-left: -1.500px; }
.run::after { content: ""; position: absolute; left: 28px; bottom: 1px; width: 4px; height: 4px; border-radius: 50%; background: #949494; }
.badge { position: absolute; left: 39px; top: 4.500px; width: 21px; height: 21px; border-radius: 50%; background: #e0352f; text-align: center; font-size: 12px; line-height: 21px; }
.dsep { width: 28px; padding: 0; }
.dsep::before { content: ""; display: block; width: 1px; height: 54px; margin: 8px 0 0 14px; background: #47494a; }
.prompt { position: absolute; left: 14px; top: 14px; color: #56c832; font: bold 14px "DejaVu Sans Mono", monospace; }
```
